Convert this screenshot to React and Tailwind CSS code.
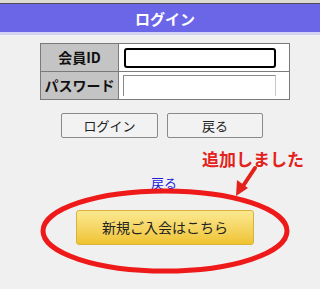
const jp = { fontFamily: '"Noto Sans CJK JP", "Liberation Sans", sans-serif' };

const App = () => {
  return (
    <div className="relative w-[320px] h-[289px] overflow-hidden bg-[#f0f0f0]" style={jp}>
      {/* top strip + header */}
      <div className="h-[4px] bg-[#dcdad2] border-b border-[#505050]" />
      <div className="h-[28px] bg-[#6b66e8] flex items-center justify-center pl-[10px]">
        <span className="text-white font-bold text-[15px] leading-none">ログイン</span>
      </div>
      <div className="h-[3px] bg-[#d4d2f4]" />

      {/* login table */}
      <div className="ml-[40px] mt-[8px] w-[250px] border border-[#7a7a7a] bg-white">
        <div className="flex h-[28px] border-b border-[#7a7a7a]">
          <div className="w-[78px] bg-[#c4c4c4] border-r border-[#7a7a7a] flex items-center justify-center font-bold text-[14px] text-[#111]">
            会員ID
          </div>
          <div className="flex-1 flex items-center pl-[5px]">
            <div className="w-[152px] h-[20px] bg-white border-2 border-black rounded-[3px]" />
          </div>
        </div>
        <div className="flex h-[27px]">
          <div className="w-[78px] bg-[#c4c4c4] border-r border-[#7a7a7a] flex items-center justify-center font-bold text-[14px] text-[#111]">
            パスワード
          </div>
          <div className="flex-1 flex items-center pl-[4px]">
            <div className="w-[153px] h-[21px] bg-white border-t border-l border-[#8a8a8a] border-r border-r-[#c8c8c8]" />
          </div>
        </div>
      </div>

      {/* buttons */}
      <div className="flex ml-[61px] mt-[13px] gap-[9px]">
        <button className="w-[97px] h-[25px] bg-[#f2f2f2] border border-[#8a8a8a] rounded-[2px] text-[13px] text-[#222]">
          ログイン
        </button>
        <button className="w-[96px] h-[25px] bg-[#f2f2f2] border border-[#8a8a8a] rounded-[2px] text-[13px] text-[#222]">
          戻る
        </button>
      </div>

      {/* annotation text */}
      <div className="ml-[202px] mt-[12px] text-[17px] leading-[18px] font-bold text-[#e3221c]">
        追加しました
      </div>

      {/* back link */}
      <div className="ml-[151px] mt-[7px] text-[13px] leading-[16px] text-[#1a1adc]">
        <a href="#" className="underline">戻る</a>
      </div>

      {/* register button */}
      <div className="ml-[76px] mt-[19px]">
        <button className="w-[178px] h-[35px] rounded-[3px] border border-[#d8b23c] bg-gradient-to-b from-[#fbe98e] to-[#efc32c] text-[14px] text-[#222]">
          新規ご入会はこちら
        </button>
      </div>

      {/* red ellipse + arrow annotation */}
      <svg className="absolute left-0 top-0 pointer-events-none" width="320" height="289" viewBox="0 0 320 289">
        <ellipse cx="165" cy="231" rx="122" ry="40" fill="none" stroke="#ee1a1a" strokeWidth="5" />
        <path d="M255 168 L241 189" stroke="#e3221c" strokeWidth="4" strokeLinecap="round" />
        <path d="M236 196 L237 180 L248 188 Z" fill="#e3221c" />
      </svg>
    </div>
  );
};

export default App;
